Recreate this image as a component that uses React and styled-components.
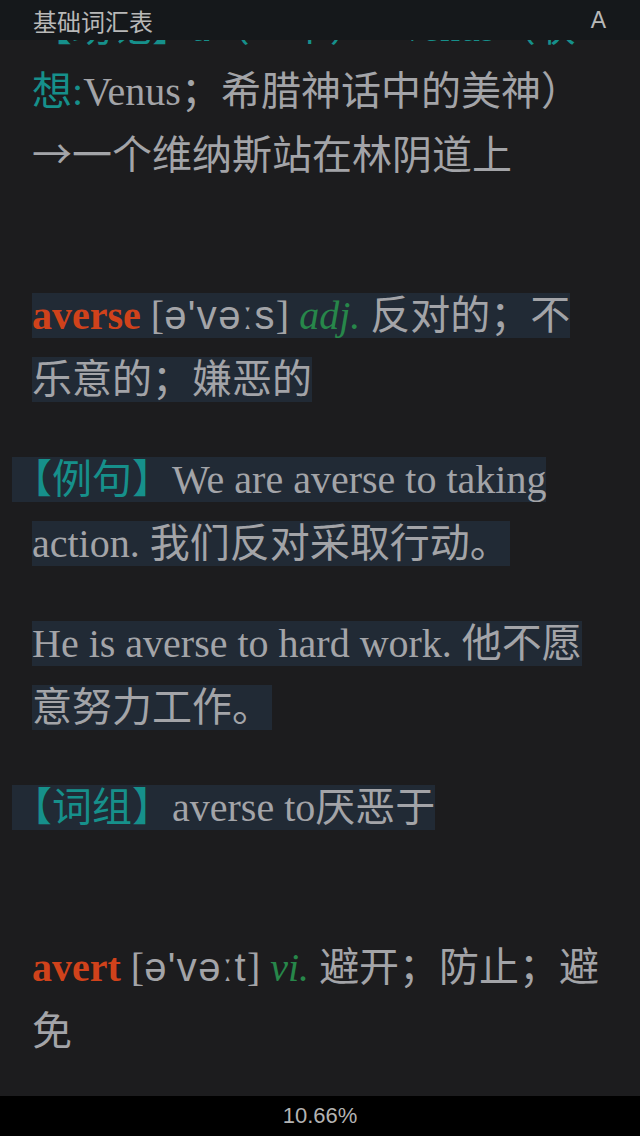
import React from 'react';
import styled, { createGlobalStyle } from 'styled-components';

const GlobalStyle = createGlobalStyle`
  html, body {
    margin: 0;
    padding: 0;
    background: #1c1c1e;
  }
`;

const Screen = styled.div`
  position: relative;
  display: flex;
  flex-direction: column;
  width: 100%;
  height: 100vh;
  overflow: hidden;
  background: #1c1c1e;
`;

const TopBar = styled.header`
  position: absolute;
  top: 0;
  left: 0;
  right: 0;
  z-index: 2;
  height: 40px;
  display: flex;
  align-items: center;
  justify-content: space-between;
  padding: 0 34px 0 33px;
  background: #15181b;
  color: #b8b8b8;
  font-family: 'Noto Sans CJK SC', 'Liberation Sans', sans-serif;
  font-size: 24px;
  .font-button {
    font-family: 'Liberation Sans', sans-serif;
    font-size: 23px;
  }
`;

const Reader = styled.main`
  flex: 1;
  overflow: hidden;
  padding: 0 36px 0 32px;
`;

const Entry = styled.section`
  margin-top: 96px;
  &:first-child {
    margin-top: -4px;
  }
`;

const Para = styled.p`
  margin: 0;
  font-family: 'Liberation Serif', 'Noto Sans CJK SC', serif;
  font-size: 40px;
  line-height: 64px;
  color: #a3a4a8;
  text-indent: ${(p) => (p.$hang ? '-20px' : '0')};
  & + & {
    margin-top: 36px;
  }
`;

const Run = styled.span`
  background: ${(p) => (p.$marked ? '#212a35' : 'transparent')};
`;

const Headword = styled.span`
  font-weight: bold;
  color: #d0421b;
`;

const Phonetic = styled.span`
  font-family: 'Liberation Sans', 'DejaVu Sans', sans-serif;
  letter-spacing: 1.4px;
  line-height: 40px;
  background: inherit;
`;

const Pos = styled.i`
  color: #27874a;
`;

const Tag = styled.span`
  color: #16908b;
`;

const Arrow = styled.span`
  font-family: 'Noto Sans CJK SC', sans-serif;
  line-height: 40px;
`;

const StatusBar = styled.footer`
  flex-shrink: 0;
  height: 40px;
  line-height: 40px;
  text-align: center;
  background: #000;
  color: #b3b3b3;
  font-family: 'Liberation Sans', sans-serif;
  font-size: 22px;
`;

const App = () => {
  return (
    <Screen>
      <GlobalStyle />
      <TopBar>
        <span>基础词汇表</span>
        <span className="font-button">A</span>
      </TopBar>
      <Reader>
        <Entry>
          <Para>
            <Tag>【助记】a（一个）+ venus（联想:</Tag>Venus；希腊神话中的美神）<Arrow>→</Arrow>一个维纳斯站在林阴道上
          </Para>
        </Entry>
        <Entry>
          <Para>
            <Run $marked>
              <Headword>averse</Headword> [<Phonetic>ə'vəːs</Phonetic>] <Pos>adj.</Pos> 反对的；不乐意的；嫌恶的
            </Run>
          </Para>
          <Para $hang>
            <Run $marked>
              <Tag>【例句】</Tag>We are averse to taking action. 我们反对采取行动。
            </Run>
          </Para>
          <Para>
            <Run $marked>He is averse to hard work. 他不愿意努力工作。</Run>
          </Para>
          <Para $hang>
            <Run $marked>
              <Tag>【词组】</Tag>averse to厌恶于
            </Run>
          </Para>
        </Entry>
        <Entry>
          <Para>
            <Headword>avert</Headword> [<Phonetic>ə'vəːt</Phonetic>] <Pos>vi.</Pos> 避开；防止；避免
          </Para>
        </Entry>
      </Reader>
      <StatusBar>10.66%</StatusBar>
    </Screen>
  );
};

export default App;
